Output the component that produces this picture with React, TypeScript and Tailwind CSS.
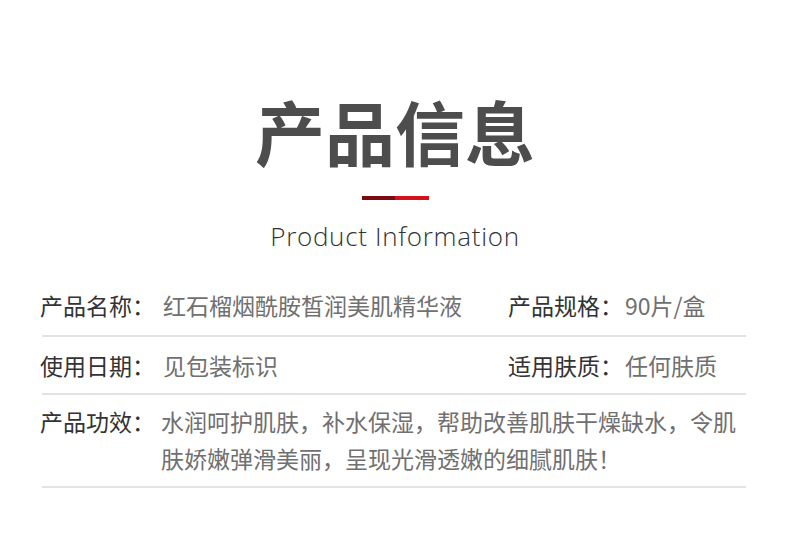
export default function App() {
  const cjk = { fontFamily: '"Noto Sans CJK SC", "Noto Sans", sans-serif' };
  return (
    <div className="w-[790px] h-[560px] bg-white overflow-hidden" style={cjk}>
      <div className="flex flex-col items-center pt-[96px]">
        <div className="text-[70px] leading-[70px] font-bold text-[#4d4d4d]" style={cjk}>
          产品信息
        </div>
        <div className="mt-[30px] flex h-[4px]">
          <div className="w-[33px] bg-[#7b0a12]" />
          <div className="w-[34px] bg-[#d3121c]" />
        </div>
        <div
          className="mt-[21px] text-[26px] leading-[30px] font-light tracking-[0.7px] text-[#333333]"
          style={{ fontFamily: '"Open Sans", "Noto Sans", sans-serif' }}
        >
          Product Information
        </div>
      </div>

      <div className="ml-[40px] w-[706px] mt-[28px] text-[23px] leading-[36px]">
        <div className="flex pt-[8px] pb-[12px]">
          <div className="flex w-[468px]">
            <span className="w-[123px] shrink-0 text-[#333333]">产品名称：</span>
            <span className="text-[#707070]">红石榴烟酰胺皙润美肌精华液</span>
          </div>
          <div className="flex">
            <span className="w-[117px] shrink-0 text-[#333333]">产品规格：</span>
            <span className="text-[#707070]">90片/盒</span>
          </div>
        </div>
        <div className="h-[2px] ml-[2px] bg-[#e3e3e3]" />
        <div className="flex py-[10px]">
          <div className="flex w-[468px]">
            <span className="w-[123px] shrink-0 text-[#333333]">使用日期：</span>
            <span className="text-[#707070]">见包装标识</span>
          </div>
          <div className="flex">
            <span className="w-[117px] shrink-0 text-[#333333]">适用肤质：</span>
            <span className="text-[#707070]">任何肤质</span>
          </div>
        </div>
        <div className="h-[2px] ml-[2px] bg-[#e3e3e3]" />
        <div className="flex pt-[8px] pb-[9px] leading-[37px]">
          <span className="w-[121px] shrink-0 text-[#333333]">产品功效：</span>
          <span className="flex-1 text-[#707070]">
            水润呵护肌肤，补水保湿，帮助改善肌肤干燥缺水，令肌肤娇嫩弹滑美丽，呈现光滑透嫩的细腻肌肤！
          </span>
        </div>
        <div className="h-[2px] ml-[2px] bg-[#e3e3e3]" />
      </div>
    </div>
  );
}
